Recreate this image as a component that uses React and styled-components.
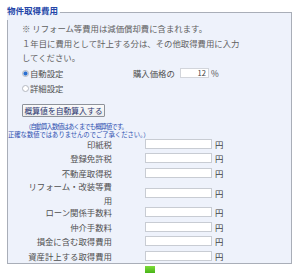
import React from "react";
import styled, { createGlobalStyle } from "styled-components";

const GlobalStyle = createGlobalStyle`
  body {
    margin: 0;
    background: #ffffff;
    font-family: "Noto Sans CJK JP", "Noto Sans", sans-serif;
  }
`;

const Page = styled.div`
  width: 300px;
  height: 273px;
  overflow: hidden;
  padding-top: 4px;
  box-sizing: border-box;
`;

const Panel = styled.fieldset`
  margin: 0 0 0 7px;
  width: 285px;
  box-sizing: border-box;
  border: 1px solid #a9aeb8;
  background: #eef2fb;
  padding: 1px 0 0 14px;
  min-inline-size: 0;
`;

const Legend = styled.legend`
  padding: 0 2px 4px 0;
  margin-left: -15px;
  font-size: 8.5px;
  line-height: 12px;
  font-weight: bold;
  color: #2446a8;
`;

const Note = styled.p`
  margin: 0;
  font-size: 8.4px;
  line-height: 14.5px;
  color: #606060;
`;

const ModeArea = styled.div`
  display: flex;
  align-items: flex-start;
  margin-top: 1px;
`;

const RadioGroup = styled.div`
  width: 111px;
  display: flex;
  flex-direction: column;
`;

const RadioLabel = styled.label`
  display: flex;
  align-items: center;
  height: 15px;
  font-size: 8.4px;
  color: #505050;
`;

const RadioDot = styled.span`
  width: 7px;
  height: 7px;
  margin-right: 1px;
  border-radius: 50%;
  border: 1px solid #b4b8c0;
  box-sizing: border-box;
  background: ${(p) =>
    p.$checked
      ? "radial-gradient(circle, #2a6fd0 0 1.6px, #a9c6ee 2.2px, #ffffff 3px)"
      : "#ffffff"};
`;

const PriceField = styled.div`
  display: flex;
  align-items: center;
  height: 15px;
  font-size: 8.4px;
  color: #505050;
`;

const PriceInput = styled.span`
  width: 29px;
  height: 10px;
  margin: 0 2px 0 5px;
  box-sizing: border-box;
  background: #ffffff;
  border: 1px solid #d2d5db;
  font-size: 7.6px;
  line-height: 8px;
  text-align: right;
  padding-right: 2px;
  color: #404040;
`;

const CalcButton = styled.button`
  display: block;
  margin: 8px 0 0 0;
  width: 83px;
  height: 13px;
  padding: 0;
  background: linear-gradient(#fafafa, #ececec);
  border: 1px solid #8e929a;
  border-radius: 1px;
  font-family: inherit;
  font-size: 7.8px;
  line-height: 11px;
  color: #2a3570;
`;

const Caution = styled.div`
  margin: 6px 0 -3px 0;
  font-size: 6.3px;
  line-height: 8.5px;
  color: #2c4fb0;
`;

const CautionLine = styled.div`
  margin-left: ${(p) => p.$indent}px;
  letter-spacing: ${(p) => p.$spacing || 0}px;
  white-space: nowrap;
`;

const Row = styled.div`
  display: flex;
  align-items: center;
  height: ${(p) => (p.$tall ? 25 : 14.5)}px;
`;

const RowLabel = styled.div`
  width: 90px;
  text-align: right;
  font-size: 8.4px;
  line-height: 14px;
  color: #505050;
`;

const AmountInput = styled.span`
  width: 67px;
  height: 10px;
  margin-left: 33px;
  box-sizing: border-box;
  background: #ffffff;
  border: 1px solid #c8ccd3;
`;

const Unit = styled.span`
  margin-left: 3px;
  font-size: 8.4px;
  color: #404040;
`;

const Footer = styled.div`
  display: flex;
  justify-content: center;
  padding-top: 2px;
`;

const GreenMark = styled.div`
  width: 10px;
  height: 8px;
  background: linear-gradient(#7edc3a, #3fae14);
`;

const costRows = [
  { label: "印紙税" },
  { label: "登録免許税" },
  { label: "不動産取得税" },
  { label: "リフォーム・改装等費用", tall: true },
  { label: "ローン関係手数料" },
  { label: "仲介手数料" },
  { label: "損金に含む取得費用" },
  { label: "資産計上する取得費用" },
];

const App = () => {
  return (
    <Page>
      <GlobalStyle />
      <Panel>
        <Legend>物件取得費用</Legend>
        <Note>
          ※ リフォーム等費用は減価償却費に含まれます。
          <br />
          １年目に費用として計上する分は、その他取得費用に入力
          <br />
          してください。
        </Note>

        <ModeArea>
          <RadioGroup>
            <RadioLabel>
              <RadioDot $checked />
              自動設定
            </RadioLabel>
            <RadioLabel>
              <RadioDot />
              詳細設定
            </RadioLabel>
          </RadioGroup>
          <PriceField>
            購入価格の
            <PriceInput>12</PriceInput>%
          </PriceField>
        </ModeArea>

        <CalcButton>概算値を自動算入する</CalcButton>

        <Caution>
          <CautionLine $indent={3} $spacing={-0.9}>
            （自動算入数値はあくまでも概算値です。
          </CautionLine>
          <CautionLine $indent={-14}>
            正確な数値ではありませんのでご了承ください。）
          </CautionLine>
        </Caution>

        {costRows.map((row) => (
          <Row key={row.label} $tall={row.tall}>
            <RowLabel>{row.label}</RowLabel>
            <AmountInput />
            <Unit>円</Unit>
          </Row>
        ))}
      </Panel>
      <Footer>
        <GreenMark />
      </Footer>
    </Page>
  );
};

export default App;
